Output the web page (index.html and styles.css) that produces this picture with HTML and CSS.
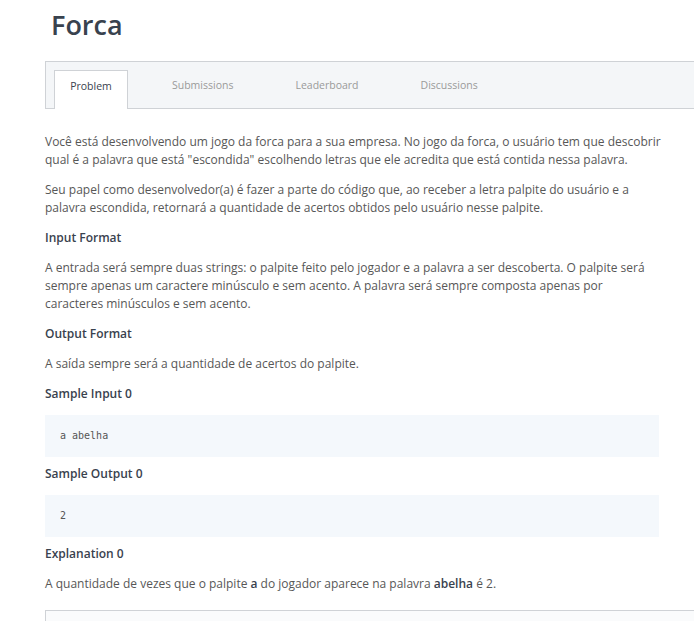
FILE: index.html
```
<!DOCTYPE html>
<html>
<head>
<meta charset="utf-8">
<link rel="stylesheet" href="styles.css">
</head>
<body>
<div class="page">
  <h1 class="title">Forca</h1>
  <nav class="tabs">
    <span class="tab active">Problem</span>
    <span class="tab">Submissions</span>
    <span class="tab">Leaderboard</span>
    <span class="tab">Discussions</span>
  </nav>
  <div class="content">
    <p class="text">Você está desenvolvendo um jogo da forca para a sua empresa. No jogo da forca, o usuário tem que descobrir qual é a palavra que está "escondida" escolhendo letras que ele acredita que está contida nessa palavra.</p>
    <p class="text">Seu papel como desenvolvedor(a) é fazer a parte do código que, ao receber a letra palpite do usuário e a palavra escondida, retornará a quantidade de acertos obtidos pelo usuário nesse palpite.</p>
    <h3 class="heading">Input Format</h3>
    <p class="text">A entrada será sempre duas strings: o palpite feito pelo jogador e a palavra a ser descoberta. O palpite será sempre apenas um caractere minúsculo e sem acento. A palavra será sempre composta apenas por caracteres minúsculos e sem acento.</p>
    <h3 class="heading">Output Format</h3>
    <p class="text">A saída sempre será a quantidade de acertos do palpite.</p>
    <h3 class="heading">Sample Input 0</h3>
    <pre class="code">a abelha</pre>
    <h3 class="heading">Sample Output 0</h3>
    <pre class="code">2</pre>
    <h3 class="heading">Explanation 0</h3>
    <p class="text">A quantidade de vezes que o palpite <strong>a</strong> do jogador aparece na palavra <strong>abelha</strong> é 2.</p>
  </div>
  <div class="editor"></div>
</div>
</body>
</html>
```
FILE: styles.css
```
html, body {
  margin: 0;
  padding: 0;
  background: #fff;
  overflow: hidden;
}
.page {
  padding-left: 45px;
  font-family: "Open Sans", "Noto Sans", sans-serif;
  color: #575757;
}
.title {
  margin: 0;
  padding: 6px 0 0 6px;
  font-size: 27px;
  font-weight: 600;
  line-height: 38px;
  color: #39424e;
}
.tabs {
  margin-top: 17px;
  width: 700px;
  height: 38px;
  padding: 8px 0 0 8px;
  background: #f4f6f8;
  border: 1px solid #cfd2d6;
  border-right: none;
  display: flex;
  align-items: stretch;
}
.tab {
  display: block;
  padding: 8px 31px 0;
  font-size: 10.5px;
  line-height: 14px;
  color: #9a9a9a;
}
.tab.active {
  padding: 8px 15px 0;
  box-sizing: border-box;
  width: 74px;
  text-align: center;
  margin-right: 13px;
  background: #fff;
  border: 1px solid #cfd2d6;
  border-bottom: none;
  margin-bottom: -1px;
  color: #39424e;
}
.content {
  width: 617px;
  padding-top: 24px;
}
.text {
  margin: 0 0 12px;
  font-size: 12px;
  line-height: 18px;
}
.text strong {
  font-weight: 600;
  color: #39424e;
}
.heading {
  margin: 0 0 12px;
  font-size: 12px;
  line-height: 18px;
  font-weight: 600;
  color: #39424e;
}
.code {
  width: 614px;
  margin: 0 0 8px;
  height: 42px;
  padding: 0 15px;
  box-sizing: border-box;
  background: #f4f8fc;
  font-family: "DejaVu Sans Mono", monospace;
  font-size: 10px;
  line-height: 42px;
  color: #555;
}
.editor {
  margin-top: 17px;
  width: 700px;
  height: 40px;
  border: 1px solid #cfd2d6;
  border-right: none;
  background: #fafbfc;
}
```
